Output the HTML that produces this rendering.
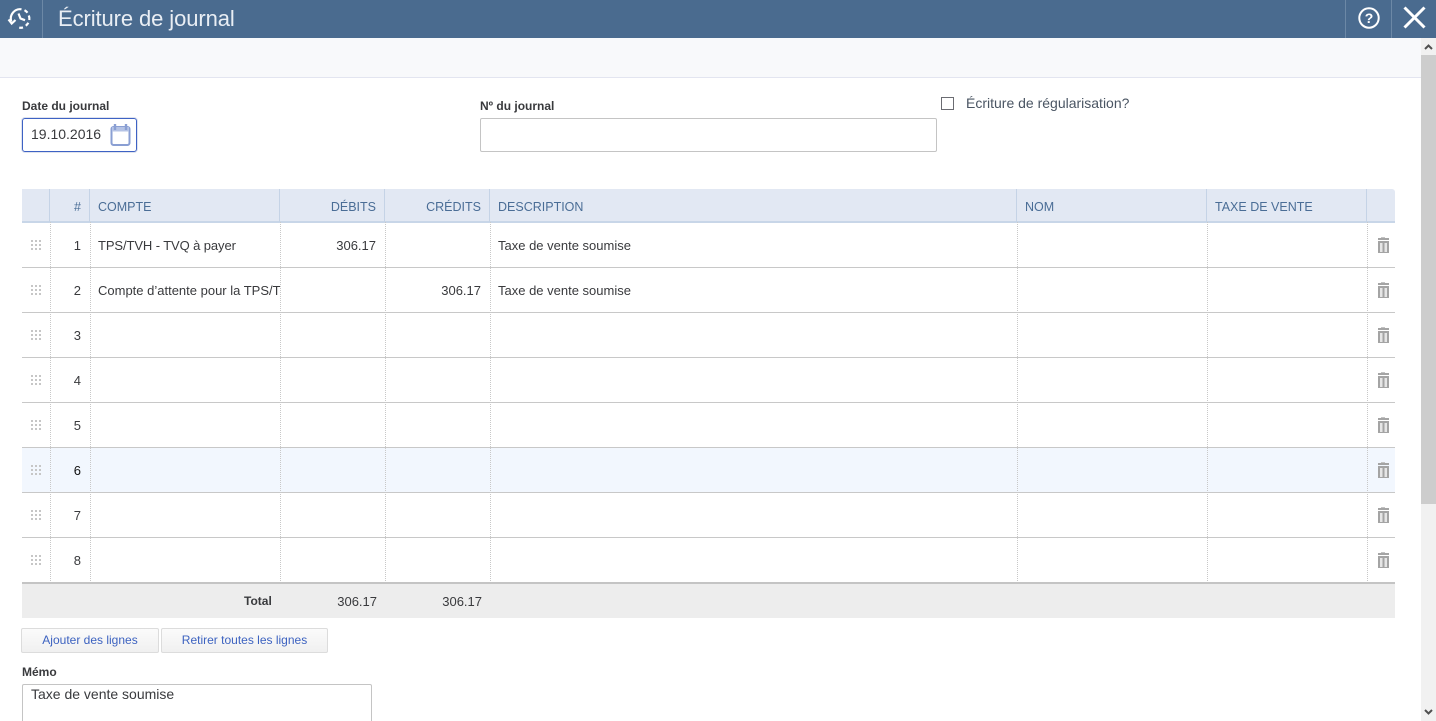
<!DOCTYPE html>
<html lang="fr"><head><meta charset="utf-8"><title>Écriture de journal</title>
<style>
html{margin:0;padding:0;width:1436px;height:721px;overflow:hidden;background:#fff}
body{margin:0;padding:0;position:relative;width:1436px;height:721px;overflow:hidden;background:#fff;font-family:"Liberation Sans",Arial,sans-serif;color:#393a3d;font-size:13px}
.a{position:absolute;white-space:nowrap}
.h{top:200px;line-height:15px;color:#4a6d96;font-size:12.5px}
.r{text-align:right}
.hl{position:absolute;left:22px;width:1373px;height:1px;background:#c8c8c8}
.vh{position:absolute;top:189px;width:1px;height:33px;background:#c5d3e6}
.vd{position:absolute;top:222px;width:0;height:361px;border-left:1px dotted #c8c8c8}
.n{left:50px;width:31px;text-align:right;line-height:15px;color:#393a3d}
.c{line-height:15px}
.g{position:absolute;left:31px;width:11px;height:11px}
.t{position:absolute;left:1376px;width:14px;height:17px}
.b{position:absolute;top:628px;height:25px;box-sizing:border-box;border:1px solid #dcdcdc;border-radius:2px;background:linear-gradient(#fbfbfb,#f0f0f0);color:#3c62c0;font-size:12px;line-height:23px;text-align:center}
</style></head><body>
<svg width="0" height="0" style="position:absolute"><defs>
<g id="grip" fill="#c6c6c6"><rect x="0" y="0" width="2" height="2"/><rect x="4" y="0" width="2" height="2"/><rect x="8" y="0" width="2" height="2"/><rect x="0" y="4" width="2" height="2"/><rect x="4" y="4" width="2" height="2"/><rect x="8" y="4" width="2" height="2"/><rect x="0" y="8" width="2" height="2"/><rect x="4" y="8" width="2" height="2"/><rect x="8" y="8" width="2" height="2"/></g>
<g id="trash"><rect x="5" y="0" width="4" height="1" fill="#c4c4c4"/><rect x="2" y="1" width="11" height="2" fill="#a4a4a4"/><rect x="2" y="4" width="11" height="12" fill="#a4a4a4"/><rect x="4" y="6" width="2.500" height="9" fill="#e6e6e6"/><rect x="8.500" y="6" width="2.500" height="9" fill="#e6e6e6"/></g>
</defs></svg>

<div class="a" style="left:0;top:0;width:1436px;height:38px;background:#4a6b8f"></div>
<div class="a" style="left:42px;top:0;width:1px;height:38px;background:#6c88a6"></div>
<div class="a" style="left:1345px;top:0;width:1px;height:38px;background:#6c88a6"></div>
<div class="a" style="left:1391px;top:0;width:1px;height:38px;background:#6c88a6"></div>
<svg class="a" style="left:7px;top:6px" width="26" height="26" viewBox="0 0 26 26" fill="none" stroke="#fff" stroke-width="2.200">
<path d="M4.300 15.500A9.300 9.300 0 0 1 14.500 3.300"/><path d="M17.500 4.200a9.300 9.300 0 0 1 3 2.500M21.800 9.500a9.300 9.300 0 0 1 .5 4.500M21.300 16.800a9.300 9.300 0 0 1-2.500 3M16 21.400a9.300 9.300 0 0 1-3.800.3"/>
<path d="M1.500 13.500l3.200 4 3.800-3.500"/><path d="M11.500 7.500l2 5 4.500 1.700"/></svg>
<div class="a" style="left:58px;top:5px;font-size:22px;line-height:27px;color:#e9eef4;letter-spacing:-.1px">Écriture de journal</div>
<svg class="a" style="left:1357px;top:6px" width="24" height="24" viewBox="0 0 24 24"><circle cx="12" cy="12" r="9.700" fill="none" stroke="#fff" stroke-width="2"/><text x="12" y="17" text-anchor="middle" font-family="Liberation Sans" font-weight="700" font-size="14" fill="#fff">?</text></svg>
<svg class="a" style="left:1403px;top:6px" width="23" height="23" viewBox="0 0 23 23"><path d="M1.500 1.500l20 20M21.500 1.500l-20 20" stroke="#fff" stroke-width="3" fill="none"/></svg>

<div class="a" style="left:0;top:38px;width:1421px;height:39px;background:#f8f9fb"></div>
<div class="a" style="left:0;top:77px;width:1421px;height:1px;background:#e3e5f0"></div>

<div class="a" style="left:1421px;top:38px;width:15px;height:683px;background:#f1f1f1"></div>
<div class="a" style="left:1421px;top:55px;width:15px;height:449px;background:#cdcdcd"></div>
<svg class="a" style="left:1421px;top:38px" width="15" height="17"><path d="M4 11l3.500-3.500L11 11" fill="none" stroke="#505050" stroke-width="2"/></svg>
<svg class="a" style="left:1421px;top:704px" width="15" height="17"><path d="M4 6l3.500 3.500L11 6" fill="none" stroke="#505050" stroke-width="2"/></svg>

<div class="a" style="left:22px;top:99px;font-size:12px;line-height:15px;font-weight:700;color:#393a3d">Date du journal</div>
<div class="a" style="left:22px;top:118px;width:115px;height:34px;box-sizing:border-box;border:1px solid #3e62c4;border-radius:3px;box-shadow:0 0 0 1px #dfe3ee"></div>
<div class="a" style="left:31px;top:126px;font-size:14px;line-height:16px;color:#393a3d">19.10.2016</div>
<svg class="a" style="left:110px;top:123px" width="21" height="24" viewBox="0 0 21 24" fill="none"><rect x="1.500" y="4" width="18" height="18" rx="2" stroke="#8a9fd3" stroke-width="2"/><rect x="2" y="4" width="17" height="4.500" fill="#b5c3e5"/><path d="M5 1v6M16 1v6" stroke="#8a9fd3" stroke-width="2.400"/></svg>

<div class="a" style="left:480px;top:99px;font-size:12px;line-height:15px;font-weight:700;color:#393a3d">Nº du journal</div>
<div class="a" style="left:480px;top:118px;width:457px;height:34px;box-sizing:border-box;border:1px solid #c4c4c4;border-radius:2px"></div>

<div class="a" style="left:941px;top:97px;width:13px;height:13px;box-sizing:border-box;border:1px solid #6b6c72;background:#fff"></div>
<div class="a" style="left:966px;top:95px;font-size:14px;line-height:16px;color:#4a5563">Écriture de régularisation?</div>

<div class="a" style="left:22px;top:189px;width:1373px;height:33px;background:#e2e8f3;border-top-right-radius:3px"></div>
<div class="a" style="left:22px;top:221px;width:1373px;height:2px;background:#c8d6e8"></div>
<div class="vh" style="left:49px"></div><div class="vh" style="left:89px"></div><div class="vh" style="left:279px"></div><div class="vh" style="left:384px"></div><div class="vh" style="left:489px"></div><div class="vh" style="left:1016px"></div><div class="vh" style="left:1206px"></div><div class="vh" style="left:1366px"></div>
<div class="a h" style="left:50px;width:31px;text-align:right">#</div>
<div class="a h" style="left:98px">COMPTE</div>
<div class="a h r" style="left:280px;width:96px">DÉBITS</div>
<div class="a h r" style="left:385px;width:96px">CRÉDITS</div>
<div class="a h" style="left:498px">DESCRIPTION</div>
<div class="a h" style="left:1025px">NOM</div>
<div class="a h" style="left:1215px">TAXE DE VENTE</div>

<div class="a" style="left:22px;top:448px;width:1373px;height:44px;background:#f2f7fe"></div>
<div class="hl" style="top:267px"></div><div class="hl" style="top:312px"></div><div class="hl" style="top:357px"></div><div class="hl" style="top:402px"></div><div class="hl" style="top:447px"></div><div class="hl" style="top:492px"></div><div class="hl" style="top:537px"></div>
<div class="vd" style="left:50px"></div><div class="vd" style="left:90px"></div><div class="vd" style="left:280px"></div><div class="vd" style="left:385px"></div><div class="vd" style="left:490px"></div><div class="vd" style="left:1017px"></div><div class="vd" style="left:1207px"></div><div class="vd" style="left:1367px"></div>

<div class="a n" style="top:238px">1</div>
<div class="a n" style="top:283px">2</div>
<div class="a n" style="top:328px">3</div>
<div class="a n" style="top:373px">4</div>
<div class="a n" style="top:418px">5</div>
<div class="a n" style="top:463px;color:#111">6</div>
<div class="a n" style="top:508px">7</div>
<div class="a n" style="top:553px">8</div>

<div class="a c" style="left:98px;top:238px;letter-spacing:-.1px">TPS/TVH - TVQ à payer</div>
<div class="a c r" style="left:280px;top:238px;width:96px">306.17</div>
<div class="a c" style="left:498px;top:238px">Taxe de vente soumise</div>
<div class="a c" style="left:98px;top:283px;width:182px;overflow:hidden">Compte d’attente pour la TPS/TVH</div>
<div class="a c r" style="left:385px;top:283px;width:96px">306.17</div>
<div class="a c" style="left:498px;top:283px">Taxe de vente soumise</div>

<svg class="g" style="top:240px"><use href="#grip"/></svg>
<svg class="g" style="top:285px"><use href="#grip"/></svg>
<svg class="g" style="top:330px"><use href="#grip"/></svg>
<svg class="g" style="top:375px"><use href="#grip"/></svg>
<svg class="g" style="top:420px"><use href="#grip"/></svg>
<svg class="g" style="top:465px"><use href="#grip"/></svg>
<svg class="g" style="top:510px"><use href="#grip"/></svg>
<svg class="g" style="top:555px"><use href="#grip"/></svg>

<svg class="t" style="top:237px"><use href="#trash"/></svg>
<svg class="t" style="top:282px"><use href="#trash"/></svg>
<svg class="t" style="top:327px"><use href="#trash"/></svg>
<svg class="t" style="top:372px"><use href="#trash"/></svg>
<svg class="t" style="top:417px"><use href="#trash"/></svg>
<svg class="t" style="top:462px"><use href="#trash"/></svg>
<svg class="t" style="top:507px"><use href="#trash"/></svg>
<svg class="t" style="top:552px"><use href="#trash"/></svg>

<div class="a" style="left:22px;top:582px;width:1373px;height:36px;background:#ededed"></div>
<div class="a" style="left:22px;top:582px;width:1373px;height:2px;background:#c4c4c4"></div>
<div class="a" style="left:244px;top:594px;font-size:12px;line-height:15px;font-weight:700">Total</div>
<div class="a c r" style="left:280px;top:594px;width:97px">306.17</div>
<div class="a c r" style="left:385px;top:594px;width:97px">306.17</div>

<div class="b" style="left:21px;width:138px">Ajouter des lignes</div>
<div class="b" style="left:161px;width:167px">Retirer toutes les lignes</div>

<div class="a" style="left:22px;top:665px;font-size:12px;line-height:15px;font-weight:700">Mémo</div>
<div class="a" style="left:22px;top:684px;width:350px;height:50px;box-sizing:border-box;border:1px solid #c4c4c4;border-radius:2px"></div>
<div class="a" style="left:31px;top:686px;font-size:14px;line-height:16px">Taxe de vente soumise</div>
</body></html>
